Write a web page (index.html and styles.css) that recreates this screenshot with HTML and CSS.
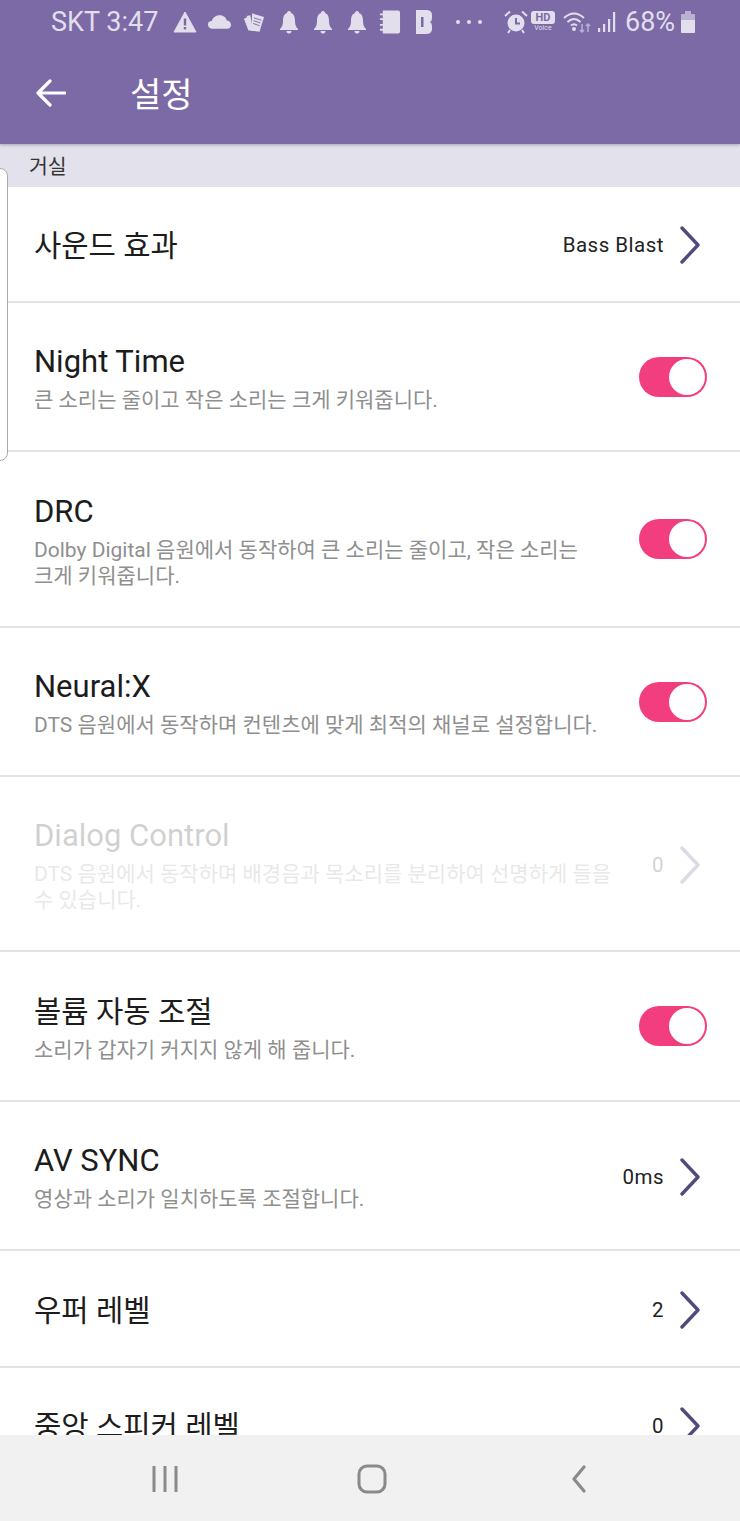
FILE: index.html
```html
<!DOCTYPE html>
<html lang="ko">
<head>
<meta charset="utf-8">
<title>설정</title>
<link rel="stylesheet" href="styles.css">
</head>
<body>
<div class="screen">
  <header class="appbar">
    <div class="status">
      <span class="carrier">SKT 3:47</span>
      <svg class="si warn" viewBox="0 0 24 22"><path d="M12 1 L23 21 H1 Z" fill="#e2deec" stroke="#e2deec" stroke-linejoin="round"/><rect x="10.800" y="7.500" width="2.400" height="7" fill="#7b6aa6"/><rect x="10.800" y="16" width="2.400" height="2.400" fill="#7b6aa6"/></svg>
      <svg class="si cloud" viewBox="0 0 26 16"><path d="M6 15 C2 15 1 12 1 10.500 C1 8 3 7 5 7 C6 3 10 1 13.500 1 C17 1 20 3.500 20.500 6.500 C23 6.500 25 8.500 25 11 C25 13.500 23 15 21 15 Z" fill="#e2deec"/></svg>
      <svg class="si cards" viewBox="0 0 24 22"><path d="M1 7 L5 5 L9 19 L6 20 Z M4 4 L8 3 L11 20 L8 20 Z" fill="#e2deec"/><path d="M10 1 L23 5 L18 21 L9 20 Z" fill="#e2deec"/><path d="M12 6 L20 8.500 M11.500 9 L19 11.500 M11 12 L18 14.500" stroke="#7b6aa6" stroke-width="1"/></svg>
      <svg class="si bell" viewBox="0 0 20 24"><path d="M10 1 C11.500 1 12 2 12 3 C15 4 16 7 16 11 C16 15 17 17 19 19 V20 H1 V19 C3 17 4 15 4 11 C4 7 5 4 8 3 C8 2 8.500 1 10 1 Z M7.500 21 H12.500 C12.500 23 11 23.500 10 23.500 C9 23.500 7.500 23 7.500 21 Z" fill="#e2deec"/></svg>
      <svg class="si bell b2" viewBox="0 0 20 24"><path d="M10 1 C11.500 1 12 2 12 3 C15 4 16 7 16 11 C16 15 17 17 19 19 V20 H1 V19 C3 17 4 15 4 11 C4 7 5 4 8 3 C8 2 8.500 1 10 1 Z M7.500 21 H12.500 C12.500 23 11 23.500 10 23.500 C9 23.500 7.500 23 7.500 21 Z" fill="#e2deec"/></svg>
      <svg class="si bell b2" viewBox="0 0 20 24"><path d="M10 1 C11.500 1 12 2 12 3 C15 4 16 7 16 11 C16 15 17 17 19 19 V20 H1 V19 C3 17 4 15 4 11 C4 7 5 4 8 3 C8 2 8.500 1 10 1 Z M7.500 21 H12.500 C12.500 23 11 23.500 10 23.500 C9 23.500 7.500 23 7.500 21 Z" fill="#e2deec"/></svg>
      <svg class="si note" viewBox="0 0 24 26"><path d="M5 1 H21 Q23 1 23 3 V23 Q23 25 21 25 H5 V22 H2 V20 H5 V17 H2 V15 H5 V11 H2 V9 H5 V6 H2 V4 H5 Z" fill="#e2deec"/></svg>
      <svg class="si bapp" viewBox="0 0 18 26"><path d="M1 1 H11 Q17 1 17 6 V9 Q17 12 15 13 Q17 14 17 17 V20 Q17 25 11 25 H1 Z" fill="#e2deec"/><rect x="6" y="8" width="2.500" height="10" fill="#7b6aa6"/></svg>
      <span class="dots"><i></i><i></i><i></i></span>
      <svg class="si alarm" viewBox="0 0 24 24"><circle cx="12" cy="13" r="8.500" fill="#e2deec"/><path d="M12 8 V13.500 H16" stroke="#7b6aa6" stroke-width="2" fill="none"/><path d="M1 6 L6 1.500 M23 6 L18 1.500 M6 20 L4 23 M18 20 L20 23" stroke="#e2deec" stroke-width="2" fill="none"/></svg>
      <span class="hd"><b>HD</b><small>Voice</small></span>
      <svg class="si wifi" viewBox="0 0 28 22"><path d="M1 7 Q11 -2 21 7 M4.500 11 Q11 5 17.500 11 M8 14.500 Q11 12 14 14.500" stroke="#e2deec" stroke-width="2" fill="none"/><circle cx="11" cy="18" r="2" fill="#e2deec"/><path d="M19 13 V21 M17 19 L19 21 L21 19 M25 21 V13 M23 15 L25 13 L27 15" stroke="#b9b0d2" stroke-width="1.500" fill="none"/></svg>
      <svg class="si signal" viewBox="0 0 20 22"><rect x="1" y="17" width="2.200" height="4" fill="#e2deec"/><rect x="6" y="13" width="2.200" height="8" fill="#e2deec"/><rect x="11" y="8" width="2.200" height="13" fill="#e2deec"/><rect x="16" y="1" width="2.200" height="20" fill="#e2deec"/></svg>
      <span class="pct">68%</span>
      <svg class="si batt" viewBox="0 0 14 22"><rect x="4" y="0" width="6" height="3" fill="#b9b0d2"/><rect x="0" y="3" width="14" height="19" rx="1" fill="#b9b0d2"/><rect x="0" y="9" width="14" height="13" rx="1" fill="#e2deec"/></svg>
    </div>
    <div class="toolbar">
      <svg class="back" viewBox="0 0 30 28"><path d="M2 14 H29 M14 2 L2 14 L14 26" stroke="#fff" stroke-width="3.200" fill="none" stroke-linecap="round" stroke-linejoin="round"/></svg>
      <span class="title">설정</span>
    </div>
  </header>

  <div class="section">거실</div>

  <main class="list">
    <div class="row r116">
      <div class="body"><div class="name ko">사운드 효과</div></div>
      <span class="value">Bass Blast</span>
      <svg class="chev" viewBox="0 0 20 38"><path d="M2 2 L18 19 L2 36" fill="none" stroke="#53497f" stroke-width="3.400" stroke-linecap="round" stroke-linejoin="round"/></svg>
    </div>
    <div class="row r149">
      <div class="body"><div class="name">Night Time</div><div class="desc">큰 소리는 줄이고 작은 소리는 크게 키워줍니다.</div></div>
      <span class="toggle"></span>
    </div>
    <div class="row r176">
      <div class="body"><div class="name">DRC</div><div class="desc">Dolby Digital 음원에서 동작하여 큰 소리는 줄이고, 작은 소리는<br>크게 키워줍니다.</div></div>
      <span class="toggle"></span>
    </div>
    <div class="row r149">
      <div class="body"><div class="name">Neural:X</div><div class="desc">DTS 음원에서 동작하며 컨텐츠에 맞게 최적의 채널로 설정합니다.</div></div>
      <span class="toggle"></span>
    </div>
    <div class="row r175 off">
      <div class="body"><div class="name">Dialog Control</div><div class="desc">DTS 음원에서 동작하며 배경음과 목소리를 분리하여 선명하게 들을<br>수 있습니다.</div></div>
      <span class="value">0</span>
      <svg class="chev" viewBox="0 0 20 38"><path d="M2 2 L18 19 L2 36" fill="none" stroke="#53497f" stroke-width="3.400" stroke-linecap="round" stroke-linejoin="round"/></svg>
    </div>
    <div class="row r150">
      <div class="body"><div class="name ko">볼륨 자동 조절</div><div class="desc">소리가 갑자기 커지지 않게 해 줍니다.</div></div>
      <span class="toggle"></span>
    </div>
    <div class="row r149">
      <div class="body"><div class="name">AV SYNC</div><div class="desc">영상과 소리가 일치하도록 조절합니다.</div></div>
      <span class="value">0ms</span>
      <svg class="chev" viewBox="0 0 20 38"><path d="M2 2 L18 19 L2 36" fill="none" stroke="#53497f" stroke-width="3.400" stroke-linecap="round" stroke-linejoin="round"/></svg>
    </div>
    <div class="row r117">
      <div class="body"><div class="name ko">우퍼 레벨</div></div>
      <span class="value">2</span>
      <svg class="chev" viewBox="0 0 20 38"><path d="M2 2 L18 19 L2 36" fill="none" stroke="#53497f" stroke-width="3.400" stroke-linecap="round" stroke-linejoin="round"/></svg>
    </div>
    <div class="row r116">
      <div class="body"><div class="name ko">중앙 스피커 레벨</div></div>
      <span class="value">0</span>
      <svg class="chev" viewBox="0 0 20 38"><path d="M2 2 L18 19 L2 36" fill="none" stroke="#53497f" stroke-width="3.400" stroke-linecap="round" stroke-linejoin="round"/></svg>
    </div>
  </main>

  <nav class="navbar">
    <svg class="nav-recent" viewBox="0 0 28 28"><path d="M3 1 V27 M14 1 V27 M25 1 V27" stroke="#8a8a8a" stroke-width="3" fill="none"/></svg>
    <svg class="nav-home" viewBox="0 0 30 30"><rect x="2" y="2" width="26" height="26" rx="8" stroke="#8a8a8a" stroke-width="3" fill="none"/></svg>
    <svg class="nav-back" viewBox="0 0 16 28"><path d="M13 2 L3 14 L13 26" stroke="#8a8a8a" stroke-width="3.200" fill="none" stroke-linecap="round" stroke-linejoin="round"/></svg>
  </nav>

  <div class="edge"></div>
</div>
</body>
</html>
```

FILE: styles.css
```css
* { box-sizing: border-box; }
html, body { margin: 0; padding: 0; }
body { font-family: Roboto, "Noto Sans CJK KR", sans-serif; background: #fff; }
.screen { position: relative; width: 740px; height: 1521px; overflow: hidden; display: flex; flex-direction: column; }

.appbar { height: 144px; flex: none; background: #7b6aa6; box-shadow: 0 1px 3px rgba(60, 50, 90, .35); position: relative; z-index: 1; }
.status { height: 44px; padding-left: 51px; display: flex; align-items: center; color: #e2deec; }
.carrier { font-size: 27px; width: 122px; white-space: nowrap; flex: none; }
.si { flex: none; display: block; }
.warn { width: 24px; height: 22px; }
.cloud { width: 25px; height: 16px; margin-left: 10px; }
.cards { width: 22px; height: 21px; margin-left: 11px; }
.bell { width: 20px; height: 24px; margin-left: 14px; }
.b2 { margin-left: 14px; }
.note { width: 23px; height: 26px; margin-left: 11px; }
.bapp { width: 18px; height: 26px; margin-left: 14px; }
.dots { display: flex; gap: 7px; margin-left: 23px; width: 26px; flex: none; }
.dots i { width: 4px; height: 4px; border-radius: 50%; background: #e2deec; flex: none; }
.alarm { width: 24px; height: 24px; margin-left: 22px; }
.hd { width: 26px; margin-left: 2px; display: flex; flex-direction: column; align-items: center; flex: none; color: #e2deec; }
.hd b { display: block; width: 24px; height: 13px; background: #e2deec; color: #7b6aa6; border-radius: 3px; font-size: 11px; line-height: 13px; text-align: center; }
.hd small { font-size: 7px; line-height: 9px; white-space: nowrap; }
.wifi { width: 28px; height: 22px; margin-left: 7px; }
.signal { width: 20px; height: 22px; margin-left: 6px; }
.pct { font-size: 27px; margin-left: 8px; flex: none; }
.batt { width: 14px; height: 22px; margin-left: 6px; }

.toolbar { height: 98px; padding-left: 36px; display: flex; align-items: center; }
.back { width: 30px; height: 28px; flex: none; }
.title { font-size: 34px; color: #fff; margin-left: 64px; line-height: 1; font-family: "Noto Sans CJK KR", sans-serif; }

.section { height: 43px; flex: none; background: #e3e1ec; padding: 9px 0 0 29px; font-size: 20.500px; line-height: 24px; color: #333; font-family: "Noto Sans CJK KR", sans-serif; }

.list { flex: 1; min-height: 0; overflow: hidden; }
.row { display: flex; align-items: center; padding: 0 39px 0 34px; border-bottom: 2px solid #e3e3e3; }
.r116 { height: 116px; }
.r117 { height: 117px; }
.r149 { height: 149px; }
.r150 { height: 150px; }
.r175 { height: 175px; }
.r176 { height: 176px; }
.body { flex: 1; min-width: 0; padding-top: 4px; }
.name { font-size: 31px; line-height: 36px; color: #1c1c1c; white-space: nowrap; }
.ko { font-size: 29.700px; }
.desc { font-size: 21px; line-height: 26px; color: #8f8f8f; margin-top: 7px; white-space: nowrap; }
.value { font-size: 20.500px; color: #222; letter-spacing: .5px; flex: none; margin-top: 2px; }
.chev { width: 20px; height: 38px; margin: 2px 1px 0 16px; flex: none; }
.toggle { position: relative; width: 68px; height: 40px; flex: none; margin-right: -6px; border-radius: 20px; background: #f23d7f; }
.toggle::after { content: ""; position: absolute; right: 2px; top: 2px; width: 36px; height: 36px; border-radius: 50%; background: #fff; }
.off > * { opacity: .2; }

.navbar { height: 86px; flex: none; background: #f1f1f1; display: flex; align-items: center; padding-top: 2px; position: relative; }
.nav-recent { width: 28px; height: 28px; margin-left: 151px; flex: none; }
.nav-home { width: 30px; height: 30px; margin-left: 178px; flex: none; }
.nav-back { width: 16px; height: 28px; margin-left: 184px; flex: none; }

.edge { position: absolute; left: -12px; top: 168px; width: 20px; height: 293px; border: 1px solid #a9a9a9; border-radius: 8px; background: #fff; }
```
